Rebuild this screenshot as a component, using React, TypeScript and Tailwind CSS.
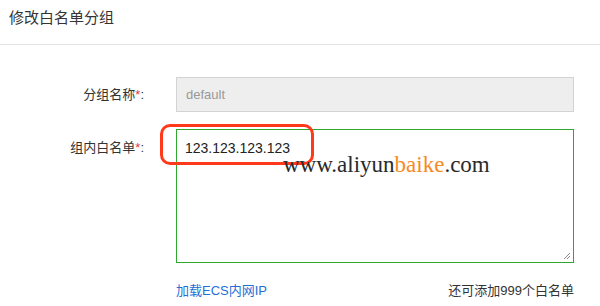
import React from "react";

const cjk = "font-['Liberation_Sans','Noto_Sans_CJK_SC',sans-serif]";

export default function App() {
  return (
    <div className={`relative w-[600px] h-[306px] bg-white overflow-hidden ${cjk}`}>
      {/* Header */}
      <div className="h-[45px] border-b border-[#e3e3e3] pl-[9px] pt-[7px] text-[15px] text-[#333]">
        修改白名单分组
      </div>

      {/* Form */}
      <div className="grid grid-cols-[144px_398px] gap-x-[32px] pt-[32px] text-[13px]">
        <label className="flex items-center justify-end h-[35px] text-[#333]">
          分组名称<span className="text-[#e4393c]">*</span>:
        </label>
        <div className="h-[35px] bg-[#eeeeee] border border-[#d3d3d3] flex items-center pl-[9px] text-[#999]">
          default
        </div>

        <label className="flex justify-end pt-[9px] mt-[17px] text-[#333]">
          组内白名单<span className="text-[#e4393c]">*</span>:
        </label>
        <div className="relative mt-[17px] h-[134px] border-[1.5px] border-[#2ea82e]">
          <div className="pl-[8px] pt-[8px] text-[14px] text-[#222]">123.123.123.123</div>
          <svg className="absolute right-[2px] bottom-[2px]" width="8" height="8" viewBox="0 0 8 8">
            <path d="M7 1 L1 7 M7 4 L4 7" stroke="#888" strokeWidth="1" />
          </svg>
        </div>

        <div />
        <div className="flex justify-between items-center mt-[18px]">
          <span className="text-[#1f6fd6]">加载ECS内网IP</span>
          <span className="text-[#333]">还可添加999个白名单</span>
        </div>
      </div>

      {/* Highlight annotation */}
      <div className="absolute left-[160px] top-[124px] w-[154px] h-[41px] border-[3px] border-[#ff3a1a] rounded-[10px]" />

      {/* Watermark */}
      <div className="absolute left-[283px] top-[153px] text-[23px] leading-none font-['Liberation_Serif',serif] text-[#2a2a2a]">
        www.aliyun<span className="text-[#f68b1f]">baike</span>.com
      </div>
    </div>
  );
}
